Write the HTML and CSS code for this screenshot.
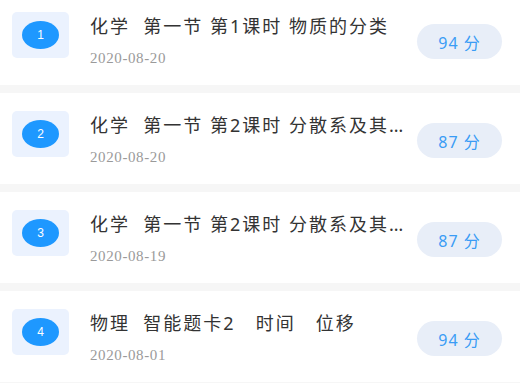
FILE: index.html
```html
<!DOCTYPE html>
<html lang="zh">

<head>
    <meta charset="utf-8">
    <meta name="viewport" content="width=device-width, initial-scale=1.0">
    <title>成绩列表</title>
    <link rel="stylesheet" href="styles.css">
</head>

<body>

    <ul class="liste">
        <li class="ret">
            <div class="nr"><span class="prik">1</span></div>
            <div class="info">
                <p class="titel">化学  第一节 第1课时 物质的分类</p>
                <p class="dato">2020-08-20</p>
            </div>
            <span class="score">94 分</span>
        </li>
        <li class="ret">
            <div class="nr"><span class="prik">2</span></div>
            <div class="info">
                <p class="titel">化学  第一节 第2课时 分散系及其胶体</p>
                <p class="dato">2020-08-20</p>
            </div>
            <span class="score">87 分</span>
        </li>
        <li class="ret">
            <div class="nr"><span class="prik">3</span></div>
            <div class="info">
                <p class="titel">化学  第一节 第2课时 分散系及其胶体</p>
                <p class="dato">2020-08-19</p>
            </div>
            <span class="score">87 分</span>
        </li>
        <li class="ret">
            <div class="nr"><span class="prik">4</span></div>
            <div class="info">
                <p class="titel">物理  智能题卡2   时间   位移</p>
                <p class="dato">2020-08-01</p>
            </div>
            <span class="score">94 分</span>
        </li>
    </ul>

</body>

</html>
```

FILE: styles.css
```css
body {
    margin: 0;
    padding: 0;
    background-color: #f6f6f6;
    font-family: "Noto Sans", "Noto Sans CJK SC", sans-serif;
}

.liste {
    list-style: none;
    margin: -6px 0 0 0;
    padding: 0;
}

.ret {
    display: flex;
    align-items: flex-start;
    box-sizing: border-box;
    height: 91px;
    padding: 18px 18px 0 12px;
    margin-bottom: 8px;
    background-color: white;
}

/*nummer boks*/

.nr {
    display: flex;
    align-items: center;
    justify-content: center;
    flex-shrink: 0;
    width: 57px;
    height: 46px;
    border-radius: 5px;
    background-color: #ebf2fe;
}

.prik {
    display: flex;
    align-items: center;
    justify-content: center;
    width: 37px;
    height: 28px;
    border-radius: 50%;
    background-color: #1e98ff;
    color: white;
    font-family: "Liberation Sans", sans-serif;
    font-size: 12px;
}

/*tekst*/

.info {
    flex: 1;
    min-width: 0;
    margin-left: 21px;
}

.titel {
    margin: 0;
    padding-top: 2px;
    font-size: 18px;
    line-height: 24px;
    letter-spacing: 2px;
    color: #333;
    white-space: pre;
    overflow: hidden;
    text-overflow: ellipsis;
}

.dato {
    margin: 10px 0 0 0;
    font-family: "Liberation Serif", serif;
    font-size: 15px;
    line-height: 20px;
    letter-spacing: 0.6px;
    color: #9a9a9a;
}

/*point*/

.score {
    display: flex;
    align-items: center;
    justify-content: center;
    flex-shrink: 0;
    width: 85px;
    height: 35px;
    margin: 12px 0 0 10px;
    border-radius: 18px;
    background-color: #e8eef8;
    color: #3a9cf5;
    font-size: 16px;
    letter-spacing: 1px;
}
```
